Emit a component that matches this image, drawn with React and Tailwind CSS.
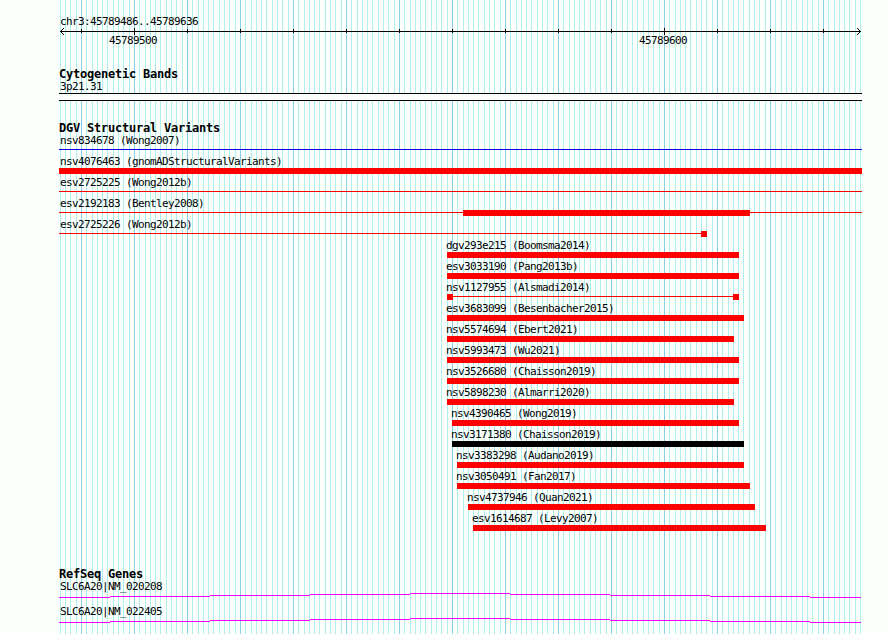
const variants = [
  { name: "nsv834678 (Wong2007)", line: [59, 862], color: "blue" },
  { name: "nsv4076463 (gnomADStructuralVariants)", bars: [[59, 862]] },
  { name: "esv2725225 (Wong2012b)", line: [59, 862] },
  { name: "esv2192183 (Bentley2008)", line: [59, 862], bars: [[463, 750]] },
  { name: "esv2725226 (Wong2012b)", line: [59, 707], bars: [[701, 707]] },
  { name: "dgv293e215 (Boomsma2014)", bars: [[447, 739]] },
  { name: "esv3033190 (Pang2013b)", bars: [[447, 739]] },
  { name: "nsv1127955 (Alsmadi2014)", line: [447, 739], bars: [[447, 453], [733, 739]] },
  { name: "esv3683099 (Besenbacher2015)", bars: [[447, 744]] },
  { name: "nsv5574694 (Ebert2021)", bars: [[447, 734]] },
  { name: "nsv5993473 (Wu2021)", bars: [[447, 739]] },
  { name: "nsv3526680 (Chaisson2019)", bars: [[447, 739]] },
  { name: "nsv5898230 (Almarri2020)", bars: [[447, 734]] },
  { name: "nsv4390465 (Wong2019)", bars: [[452, 739]] },
  { name: "nsv3171380 (Chaisson2019)", bars: [[452, 744]], color: "black" },
  { name: "nsv3383298 (Audano2019)", bars: [[457, 744]] },
  { name: "nsv3050491 (Fan2017)", bars: [[457, 750]] },
  { name: "nsv4737946 (Quan2021)", bars: [[468, 755]] },
  { name: "esv1614687 (Levy2007)", bars: [[473, 766]] },
];

const genes = ["SLC6A20|NM_020208", "SLC6A20|NM_022405"];

const fills = { red: "#ff0000", blue: "#0000e0", black: "#000000" };

// one grid line per base, a darker one every ten
function GridLines() {
  const lines = [];
  for (let i = -4; i <= 147; i++) {
    lines.push({ x: 81 + Math.floor(i * 5.3 + 0.49), major: i % 10 === 0 });
  }
  return (
    <svg
      className="absolute inset-0"
      width="890"
      height="634"
      shapeRendering="crispEdges"
    >
      {lines.map((l) => (
        <rect
          key={l.x}
          x={l.x}
          y="0"
          width="1"
          height="634"
          fill={l.major ? "#87ceeb" : "#afeeee"}
        />
      ))}
    </svg>
  );
}

function Ruler() {
  const ticks = [];
  for (let x = 81; x < 861; x += 53) ticks.push(x);
  return (
    <svg width="890" height="9" className="block" shapeRendering="crispEdges">
      <rect x="60" y="4" width="801" height="1" />
      {ticks.map((x) =>
        x === 134 || x === 664 ? (
          <rect key={x} x={x} y="1" width="1" height="7" />
        ) : (
          <rect key={x} x={x} y="2" width="1" height="4" />
        )
      )}
      {[1, 2, 3].map((d) => (
        <g key={d}>
          <rect x={60 + d} y={4 - d} width="1" height="1" />
          <rect x={60 + d} y={4 + d} width="1" height="1" />
          <rect x={860 - d} y={4 - d} width="1" height="1" />
          <rect x={860 - d} y={4 + d} width="1" height="1" />
        </g>
      ))}
    </svg>
  );
}

function Heading({ children }) {
  return (
    <h2 className="pl-[59px] h-[13px] leading-[15px] text-[12px] font-bold tracking-[-0.224px]">
      {children}
    </h2>
  );
}

function Variant({ name, line, bars = [], color = "red" }) {
  const start = line ? line[0] : bars[0][0];
  return (
    <div className="h-[21px]">
      <div
        className="h-[12px] leading-[13px]"
        style={{ paddingLeft: start === 59 ? 60 : start - 1 }}
      >
        {name}
      </div>
      <svg
        width="890"
        height="9"
        className="block"
        fill={fills[color]}
        shapeRendering="crispEdges"
      >
        {line && <rect x={line[0]} y="3" width={line[1] - line[0]} height="1" />}
        {bars.map(([a, b]) => (
          <rect key={a} x={a} y="1" width={b - a} height="6" />
        ))}
      </svg>
    </div>
  );
}

function Gene({ name }) {
  return (
    <div className="h-[25px]">
      <div className="pl-[60px] h-[12px] leading-[13px]">{name}</div>
      <svg
        width="890"
        height="13"
        className="block"
        fill="#ff00ff"
        shapeRendering="crispEdges"
      >
        {[5, 4, 3, 2, 1, 2, 3, 4, 5].map((y, i) => {
          const a = Math.max(59, 10 + i * 100);
          const b = Math.min(861, 110 + i * 100);
          return <rect key={i} x={a} y={y} width={b - a} height="1" />;
        })}
      </svg>
    </div>
  );
}

function App() {
  return (
    <div className="relative w-[890px] h-[634px] overflow-hidden bg-[#fdfffc] text-black whitespace-pre text-[11px] tracking-[-0.622px] font-['DejaVu_Sans_Mono',monospace]">
      <GridLines />
      <div className="relative flex flex-col">
        {/* Position */}
        <div className="mt-[15px] pl-[60px] h-[12px] leading-[13px]">
          chr3:45789486..45789636
        </div>
        <Ruler />
        <div className="flex pl-[109px] gap-[482px] h-[13px] leading-[9px]">
          <span className="w-[48px]">45789500</span>
          <span className="w-[48px]">45789600</span>
        </div>

        {/* Cytogenetic bands */}
        <div className="mt-[18px]">
          <Heading>Cytogenetic Bands</Heading>
          <div className="pl-[60px] h-[13px] leading-[13px]">3p21.31</div>
          <div className="ml-[59px] w-[803px] h-[8px] border-y border-black bg-[#fdfffc]" />
        </div>

        {/* Structural variants */}
        <div className="mt-[20px]">
          <Heading>DGV Structural Variants</Heading>
          {variants.map((v) => (
            <Variant key={v.name} {...v} />
          ))}
        </div>

        {/* Genes */}
        <div className="mt-[34px]">
          <Heading>RefSeq Genes</Heading>
          {genes.map((g) => (
            <Gene key={g} name={g} />
          ))}
        </div>
      </div>
    </div>
  );
}

export default App;
